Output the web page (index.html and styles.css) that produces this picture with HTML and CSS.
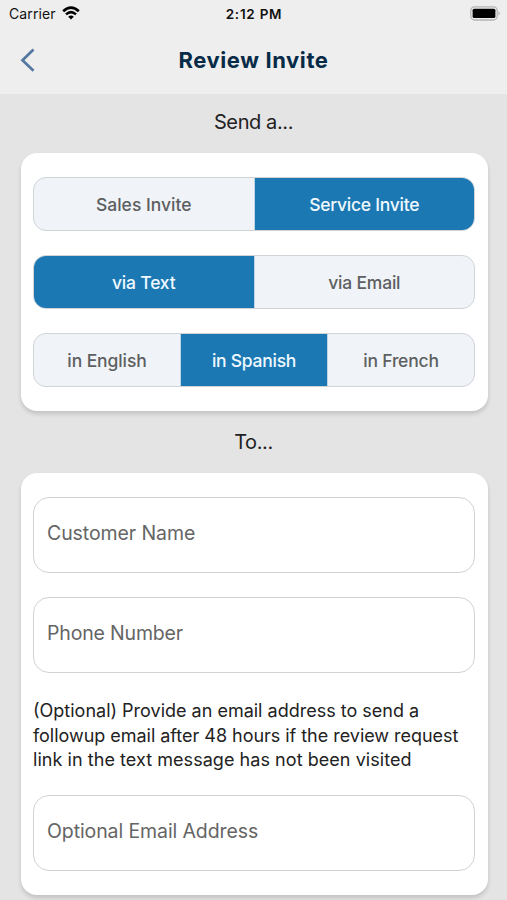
FILE: index.html
```html
<!DOCTYPE html>
<html lang="en">
<head>
<meta charset="utf-8">
<title>Review Invite</title>
<link rel="stylesheet" href="styles.css">
</head>
<body>
<header class="top">
  <div class="status">
    <div class="carrier"><span>Carrier</span>
      <svg class="wifi" viewBox="0 0 18 14" width="18" height="14"><path d="M1.200 5.200Q9-2 16.800 5.200" fill="none" stroke="#000" stroke-width="2.800"/><path d="M4 8.400Q9 3.800 14 8.400" fill="none" stroke="#000" stroke-width="2.500"/><path d="M6.200 10.700Q9 8.200 11.800 10.700L9 13.500Z"/></svg>
    </div>
    <time>2:12 PM</time>
    <svg class="battery" viewBox="0 0 31 15" width="31" height="15"><rect x=".8" y=".8" width="26.400" height="13.200" rx="3.800" fill="none" stroke="#b4b4b4" stroke-width="1.300"/><rect x="2.600" y="2.700" width="22.800" height="9.400" rx="1.500"/><path d="M28.500 5Q31 7.400 28.500 9.800Z" fill="#aaa"/></svg>
  </div>
  <nav class="nav">
    <svg class="back" viewBox="0 0 16 24" width="16" height="24"><path d="M13.500 1.500 2.500 12.300 13.500 22.700" fill="none" stroke="#54789f" stroke-width="2.700"/></svg>
    <h1>Review Invite</h1>
  </nav>
</header>
<main>
  <h2 class="send">Send a...</h2>
  <section class="card">
    <div class="segments">
      <div class="segment"><span>Sales Invite</span></div>
      <div class="segment active"><span class="service">Service Invite</span></div>
    </div>
    <div class="segments">
      <div class="segment active"><span class="text">via Text</span></div>
      <div class="segment"><span class="email">via Email</span></div>
    </div>
    <div class="segments">
      <div class="segment"><span class="english">in English</span></div>
      <div class="segment active"><span class="spanish">in Spanish</span></div>
      <div class="segment"><span class="french">in French</span></div>
    </div>
  </section>
  <h2 class="to">To...</h2>
  <section class="card">
    <div class="field"><span class="name">Customer Name</span></div>
    <div class="field"><span class="phone">Phone Number</span></div>
    <p class="note"><span class="line-a">(Optional) Provide an email address to send a</span><br><span class="line-b">followup email after 48 hours if the review request</span><br><span class="line-c">link in the text message has not been visited</span></p>
    <div class="field"><span class="address">Optional Email Address</span></div>
  </section>
</main>
</body>
</html>
```
FILE: styles.css
```css
* { box-sizing: border-box; }
html, body { height: 100%; overflow: hidden; }
body { margin: 0; background: #e4e4e4; font-family: Inter, "Liberation Sans", sans-serif; color: #222; }
.top { height: 94px; background: #eee; }
.status { height: 27px; display: grid; grid-template-columns: 1fr auto 1fr; align-items: center; padding: 0 6px 0 7px; font-size: 14px; color: #111; }
.carrier { display: flex; align-items: center; gap: 6px; padding-left: 2px; }
.carrier span { letter-spacing: .1px; }
.wifi { margin-top: -2px; }
.status time { font-weight: 600; font-size: 13.5px; letter-spacing: .75px; }
.battery { justify-self: end; }
.nav { height: 66px; display: grid; grid-template-columns: 1fr auto 1fr; align-items: center; padding: 0 20px; }
h1 { margin: 0; font-size: 22px; font-weight: 750; color: #072b47; letter-spacing: .6px; }
h2 { margin: 0; display: flex; align-items: center; justify-content: center; font-size: 20px; font-weight: 400; }
.send { height: 59px; padding-bottom: 3px; letter-spacing: -.4px; }
.to { height: 61.5px; letter-spacing: -.4px; }
.card { margin: 0 19.5px 0 20.5px; padding: 24px 12.5px; background: #fff; border-radius: 16px; box-shadow: 0 3px 4px rgba(0,0,0,.15); display: flex; flex-direction: column; gap: 24px; }
.to + .card { padding-top: 24.5px; }
.segments { height: 54px; display: flex; border: 1px solid #d0d3d7; border-radius: 13px; overflow: hidden; background: #f0f4f8; }
.segment { flex: 1; display: flex; align-items: center; justify-content: center; font-size: 17.5px; font-weight: 500; color: #5d5f61; }
.segment + .segment { border-left: 1px solid #bdd4e5; }
.active { background: #1c78b2; color: #eff8ff; }
.service, .spanish { letter-spacing: -.25px; }
.text, .email, .french { letter-spacing: -.2px; }
.english { letter-spacing: -.1px; }
.field { height: 76px; border: 1px solid #d2d2d2; border-radius: 16px; padding: 0 13px 4px; display: flex; align-items: center; font-size: 19.5px; color: #656565; }
.name { letter-spacing: -.08px; }
.phone { letter-spacing: -.17px; }
.address { letter-spacing: -.1px; }
.note { margin: 0; padding-top: 2px; margin-bottom: -2px; font-size: 18px; line-height: 24.5px; }
.line-b { letter-spacing: -.03px; }
.line-c { letter-spacing: .05px; }
span { white-space: nowrap; }
```
